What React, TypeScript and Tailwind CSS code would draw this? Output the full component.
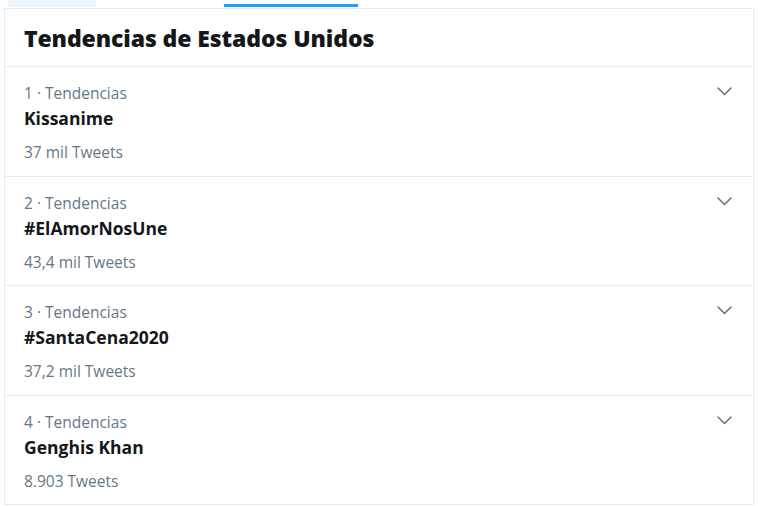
interface Trend {
  rank: number;
  name: string;
  tweets: string;
}

const trends: Trend[] = [
  { rank: 1, name: "Kissanime", tweets: "37 mil Tweets" },
  { rank: 2, name: "#ElAmorNosUne", tweets: "43,4 mil Tweets" },
  { rank: 3, name: "#SantaCena2020", tweets: "37,2 mil Tweets" },
  { rank: 4, name: "Genghis Khan", tweets: "8.903 Tweets" },
];

function Chevron() {
  return (
    <svg width="15" height="9" viewBox="0 0 15 9" fill="none" className="mt-[4px] mr-[2px]">
      <path d="M1 1 L7.5 7.5 L14 1" stroke="#657786" strokeWidth="1.6" strokeLinecap="round" strokeLinejoin="round" />
    </svg>
  );
}

export default function App() {
  return (
    <div
      className="w-[763px] h-[506px] bg-white overflow-hidden"
      style={{ fontFamily: '"Open Sans", "Noto Sans", Arial, sans-serif' }}
    >
      {/* tabs strip */}
      <div className="flex h-[8px] pl-[8px]">
        <div className="w-[88px] h-[7px] bg-[#eef6fd]" />
        <div className="ml-[128px] w-[134px] pt-[4px]">
          <div className="h-[3px] bg-[#1da1f2]" />
        </div>
      </div>

      {/* card */}
      <div className="ml-[4px] w-[750px] border border-[#e6ecf0] border-b-0">
        <div className="h-[58px] border-b border-[#e6ecf0] px-[19px] pt-[13px]">
          <h2 className="text-[23px] leading-[32px] font-extrabold text-[#14171a] tracking-[-0.1px]">
            Tendencias de Estados Unidos
          </h2>
        </div>

        {trends.map((t) => (
          <div
            key={t.rank}
            className="h-[109.5px] border-b border-[#e6ecf0] px-[19px] pt-[16px] flex justify-between"
          >
            <div className="flex flex-col">
              <span className="text-[15.5px] leading-[20px] text-[#657786]">
                {t.rank}&nbsp;·&nbsp;Tendencias
              </span>
              <span className="text-[17.5px] leading-[26px] font-bold text-[#14171a] mt-[2px]">
                {t.name}
              </span>
              <span className="text-[15.5px] leading-[20px] text-[#657786] mt-[11px]">
                {t.tweets}
              </span>
            </div>
            <Chevron />
          </div>
        ))}
      </div>
    </div>
  );
}
